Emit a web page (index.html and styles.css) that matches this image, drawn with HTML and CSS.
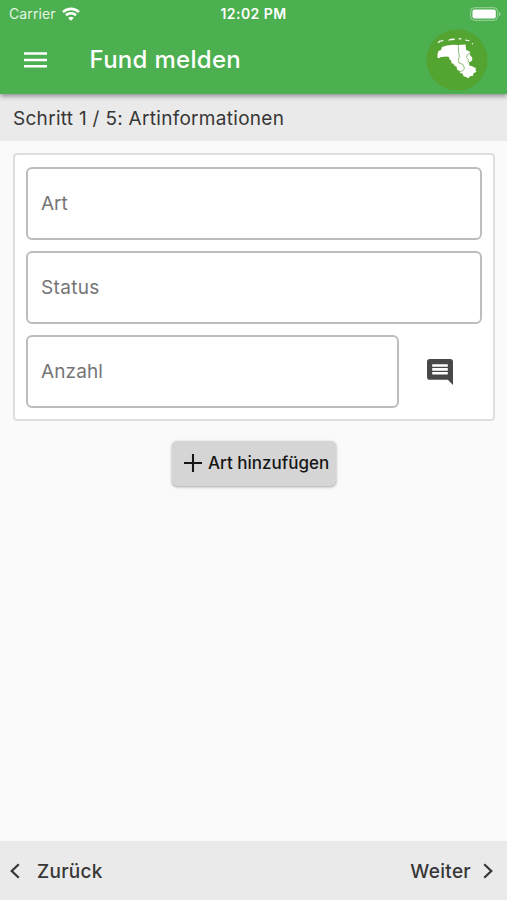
FILE: index.html
```html
<!DOCTYPE html>
<html lang="de">
<head>
<meta charset="utf-8">
<title>Fund melden</title>
<link rel="stylesheet" href="styles.css">
</head>
<body>
<div class="app">
  <header class="header">
    <div class="statusbar">
      <div class="carrier"><span class="carrier-name">Carrier</span>
        <svg class="wifi" width="18" height="14" viewBox="0 0 18 14" fill="none" stroke="#fff" stroke-width="2.6"><path d="M1 5.1C5.5.8 12.5.8 17 5.1"/><path d="M4 8.3c2.8-2.7 7.2-2.7 10 0"/><path d="M9 13.8 6.1 10.9q2.9-2.5 5.8 0z" fill="#fff" stroke="none"/></svg>
      </div>
      <span class="time">12:02 PM</span>
      <svg class="battery" width="32" height="14" viewBox="0 0 32 14"><rect x=".7" y=".7" width="27" height="12.6" rx="3.8" fill="none" stroke="#fff" stroke-opacity=".45"/><rect x="2.5" y="2.5" width="23.3" height="9" rx="2" fill="#fff"/><path d="M29.1 4.7q3 2.3 0 4.6z" fill="#fff" fill-opacity=".5"/></svg>
    </div>
    <div class="toolbar">
      <svg class="menu" width="23" height="16" viewBox="0 0 23 16" fill="#fff"><path d="M0 .3h23v2.5H0zM0 6.7h23v2.5H0zM0 13.1h23v2.5H0z"/></svg>
      <h1 class="title">Fund melden</h1>
      <svg class="logo" width="62" height="62" viewBox="0 0 62 62"><circle cx="31" cy="31" r="30.5" fill="#54a431"/><path fill="#fff" d="m11.5 25 1-3 2.5-1 1-3 5-1.5 6-.8 5 .3 7.500-.5.7 5.500 3.500 1.500.5 4 2 2v3l-3.200 2 .3 3 3 .8 2 1.200 1.500.3-.3 2.500 1 1.500-3 1.500-.5 2.500-3 .5-1.500 2-3-1.500-2-.5-.8-2.500-2.700-1-.8-2.300-2-.5-.7-3.500-2-.8-1-2-2-.5-.5-3-1.500-.7-.5-2.500-3-.4-6 .7-1 1-1.500-.5z"/><path d="m11.500 13.500 1.800-1.800 4.200-.8-.3 1.400-3 .5-1.400 1.200zM22 11l3-1.200 3.500-.3.300 1.500-6.500.6zM32 9.800l2-.9 2 1.300-2.700.2zM39 10.500l4.500.7-.2 1-4.200-.6zM45.500 15l1.200-1.200.4 1.700z" fill="#fff"/><path d="M32.300 16l.2 6 .8 5-1 4.500.7 2.500 4 1.500 1.500 4-2 2.500-3.500.6M45 23.500l-3.500 2-1 3 1.800 2-.3 3" fill="none" stroke="#83b46a" stroke-width=".9"/></svg>
    </div>
  </header>
  <div class="step"><span class="step-text">Schritt 1 / 5: Artinformationen</span></div>
  <main class="content">
    <section class="card">
      <div class="field"><span class="art">Art</span></div>
      <div class="field"><span class="status">Status</span></div>
      <div class="row">
        <div class="field"><span class="count">Anzahl</span></div>
        <svg class="comment" width="26" height="26" viewBox="2 2 20 20" fill="#484848"><path d="M21.99 4c0-1.1-.89-2-1.99-2H4c-1.1 0-2 .9-2 2v12c0 1.1.9 2 2 2h14l4 4-.01-18zM18 14H6v-2h12v2zm0-3H6V9h12v2zm0-3H6V6h12v2z"/></svg>
      </div>
    </section>
    <button class="add"><svg width="18" height="18" viewBox="0 0 18 18" stroke="#151515" stroke-width="2.1"><path d="M9 0v18M0 9h18"/></svg><span class="add-text">Art hinzufügen</span></button>
  </main>
  <footer class="footer">
    <div class="nav"><svg width="10" height="16" viewBox="0 0 10 16"><path d="M8.800 1.300 1.700 8l7.100 6.700"/></svg><span class="back">Zurück</span></div>
    <div class="nav next"><span class="forward">Weiter</span><svg width="10" height="16" viewBox="0 0 10 16"><path d="m1.200 1.300 7.100 6.700-7.100 6.700"/></svg></div>
  </footer>
</div>
</body>
</html>
```
FILE: styles.css
```css
* { box-sizing: border-box; }
body { margin: 0; font-family: Inter, "Liberation Sans", sans-serif; color: #373737; }
.app { height: 900px; display: flex; flex-direction: column; background: #fafafa; }
svg { display: block; flex: none; }
span { white-space: nowrap; }
.header { height: 94px; flex: none; background: #4caf50; color: #fff; box-shadow: 0 2px 5px rgba(0,0,0,.42); z-index: 1; }
.statusbar { height: 27px; display: grid; grid-template-columns: 1fr auto 1fr; align-items: center; padding: 0 5px 0 9px; }
.carrier { display: flex; align-items: center; gap: 6px; }
.carrier-name { font-size: 14px; letter-spacing: .12px; color: #e4f5e4; }
.time { margin-right: 4px; font-size: 14px; font-weight: 600; letter-spacing: .45px; }
.battery { justify-self: end; }
.toolbar { height: 67px; display: flex; align-items: center; padding: 0 19px 1px 24px; }
.title { margin: 0 auto 0 42.500px; font-size: 24px; line-height: 30px; font-weight: 500; letter-spacing: .3px; white-space: nowrap; }
.step { height: 47px; flex: none; display: flex; align-items: center; padding: 1px 0 0 13px; background: #eaeaea; font-size: 19px; letter-spacing: .29px; }
.content { flex: 1; display: flex; flex-direction: column; align-items: center; padding: 12px 12px 0 13px; }
.card { width: 100%; height: 268px; padding: 12px 11px; border: 2px solid #dedede; border-radius: 4px; background: #fff; display: flex; flex-direction: column; gap: 11px; }
.field { height: 73px; flex: none; border: 2px solid #bdbdbd; border-radius: 6px; display: flex; align-items: center; padding-left: 13px; font-size: 19px; color: #757575; }
.status { letter-spacing: .35px; }
.count { letter-spacing: .1px; }
.row { display: flex; align-items: center; }
.row .field { width: 373px; }
.comment { margin-left: 28px; }
.add { margin: 20px 0 0; width: 164px; height: 45px; border: 0; border-radius: 5px; background: #d5d5d5; box-shadow: 0 1px 3px rgba(0,0,0,.35); padding: 0 0 2px 12px; display: flex; align-items: center; gap: 6px; font-family: inherit; font-size: 17px; font-weight: 500; color: #151515; }
.footer { height: 59px; flex: none; display: flex; justify-content: space-between; align-items: center; padding: 1px 14px 0 10px; background: #eaeaea; font-size: 19px; font-weight: 500; letter-spacing: .3px; }
.nav { display: flex; align-items: center; gap: 17px; }
.next { gap: 12px; }
.nav path { fill: none; stroke: #373737; stroke-width: 2.2; }
```
